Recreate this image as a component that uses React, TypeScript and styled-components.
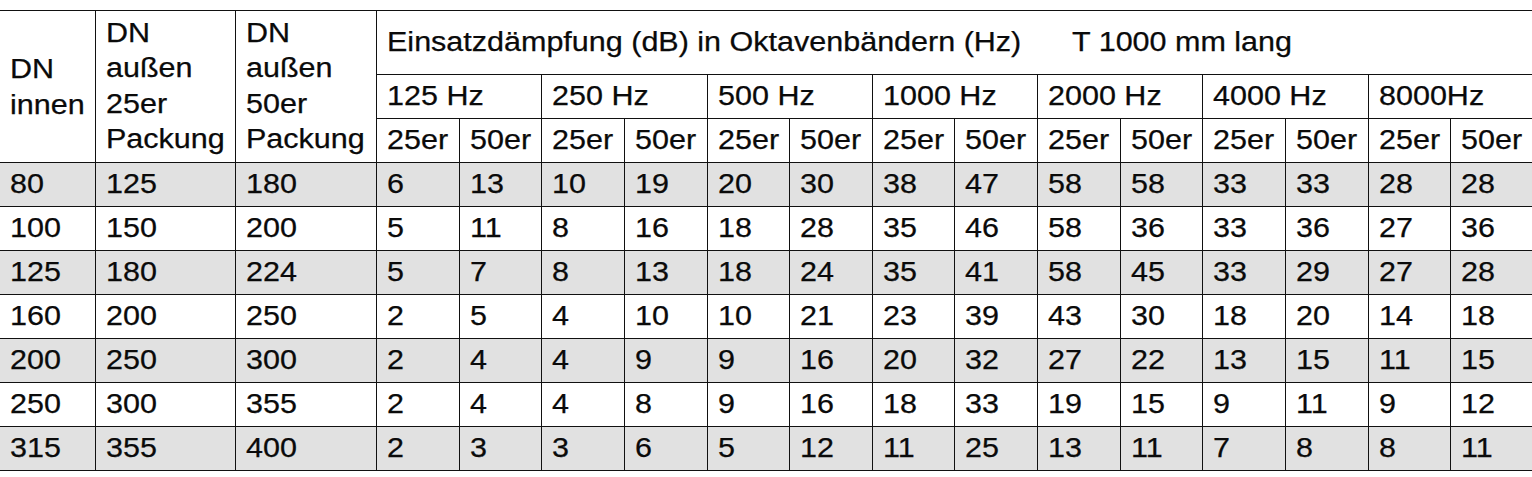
import React from "react";
import styled, { createGlobalStyle } from "styled-components";

const Global = createGlobalStyle`
  html, body {
    margin: 0;
    padding: 0;
    background: #ffffff;
    overflow: hidden;
  }
  body {
    font-family: "Liberation Sans", Arial, sans-serif;
    color: #000;
  }
`;

const Table = styled.div`
  display: grid;
  grid-template-columns: 96px 140px 141px repeat(14, 82.64px);
  grid-template-rows: 64px 44px 44px repeat(7, 44px);
  margin-top: 10px;
  border-top: 1px solid #111;
  width: max-content;
`;

const Cell = styled.div<{ $shade?: boolean; $cols?: number; $rows?: number }>`
  box-sizing: border-box;
  display: flex;
  align-items: center;
  padding-left: 10px;
  border-right: 1px solid #111;
  border-bottom: 1px solid #111;
  background: ${(p) => (p.$shade ? "#e1e1e1" : "#ffffff")};
  grid-column: ${(p) => (p.$cols ? `span ${p.$cols}` : "auto")};
  grid-row: ${(p) => (p.$rows ? `span ${p.$rows}` : "auto")};
  font-size: 27px;
  line-height: 31px;
  white-space: nowrap;
  overflow: visible;
`;

const Txt = styled.span<{ $lh?: number }>`
  display: inline-block;
  transform: scaleX(1.13);
  transform-origin: left center;
  line-height: ${(p) => (p.$lh ? `${p.$lh}px` : "31px")};
  color: #0a0a0a;
  -webkit-text-stroke: 0.25px #0a0a0a;
`;

const Note = styled.span`
  margin-left: 45px;
`;

const bands = ["125 Hz", "250 Hz", "500 Hz", "1000 Hz", "2000 Hz", "4000 Hz", "8000Hz"];

const rows: number[][] = [
  [80, 125, 180, 6, 13, 10, 19, 20, 30, 38, 47, 58, 58, 33, 33, 28, 28],
  [100, 150, 200, 5, 11, 8, 16, 18, 28, 35, 46, 58, 36, 33, 36, 27, 36],
  [125, 180, 224, 5, 7, 8, 13, 18, 24, 35, 41, 58, 45, 33, 29, 27, 28],
  [160, 200, 250, 2, 5, 4, 10, 10, 21, 23, 39, 43, 30, 18, 20, 14, 18],
  [200, 250, 300, 2, 4, 4, 9, 9, 16, 20, 32, 27, 22, 13, 15, 11, 15],
  [250, 300, 355, 2, 4, 4, 8, 9, 16, 18, 33, 19, 15, 9, 11, 9, 12],
  [315, 355, 400, 2, 3, 3, 6, 5, 12, 11, 25, 13, 11, 7, 8, 8, 11],
];

export default function App() {
  return (
    <>
      <Global />
      <Table>
        <Cell $rows={3}>
          <Txt $lh={36}>
            DN
            <br />
            innen
          </Txt>
        </Cell>
        <Cell $rows={3}>
          <Txt $lh={35.5}>
            DN
            <br />
            außen
            <br />
            25er
            <br />
            Packung
          </Txt>
        </Cell>
        <Cell $rows={3}>
          <Txt $lh={35.5}>
            DN
            <br />
            außen
            <br />
            50er
            <br />
            Packung
          </Txt>
        </Cell>
        <Cell $cols={14}>
          <Txt>
            Einsatzdämpfung (dB) in Oktavenbändern (Hz)
            <Note>T 1000 mm lang</Note>
          </Txt>
        </Cell>
        {bands.map((b) => (
          <Cell key={b} $cols={2}>
            <Txt>{b}</Txt>
          </Cell>
        ))}
        {bands.map((b) => (
          <React.Fragment key={"s" + b}>
            <Cell>
              <Txt>25er</Txt>
            </Cell>
            <Cell>
              <Txt>50er</Txt>
            </Cell>
          </React.Fragment>
        ))}
        {rows.map((r, i) =>
          r.map((v, j) => (
            <Cell key={`${i}-${j}`} $shade={i % 2 === 0}>
              <Txt>{v}</Txt>
            </Cell>
          ))
        )}
      </Table>
    </>
  );
}
